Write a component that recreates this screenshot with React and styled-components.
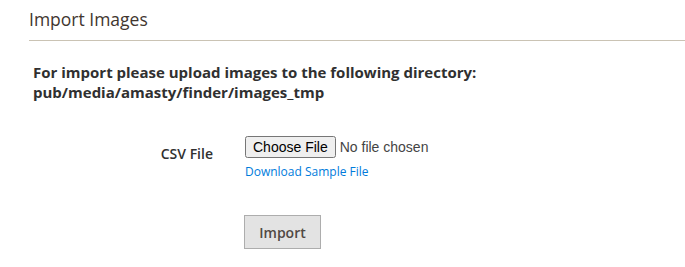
import React from "react";
import styled, { createGlobalStyle } from "styled-components";

const Global = createGlobalStyle`
  html, body { margin: 0; padding: 0; background: #fff; }
  body { font-family: "Open Sans", "Liberation Sans", sans-serif; color: #303030; }
`;

const Page = styled.div`
  padding: 0 0 0 29px;
`;

const Legend = styled.h2`
  margin: 0;
  padding: 8px 0 0 0;
  height: 32px;
  box-sizing: content-box;
  font-size: 17.5px;
  font-weight: 400;
  line-height: 22px;
  color: #41362f;
  border-bottom: 1px solid #cac3b4;
`;

const Notice = styled.p`
  margin: 21px 0 0 4px;
  font-size: 15px;
  font-weight: 700;
  line-height: 20px;
  color: #303030;
`;

const Row = styled.div`
  display: grid;
  grid-template-columns: 184px 1fr;
  column-gap: 32px;
  margin-top: 34px;
`;

const Label = styled.label`
  text-align: right;
  font-size: 14px;
  font-weight: 600;
  line-height: 20px;
  padding-top: 8px;
  color: #303030;
`;

const Control = styled.div`
  display: flex;
  flex-direction: column;
  align-items: flex-start;
`;

const FileInput = styled.input`
  font-family: "Liberation Sans", Arial, sans-serif;
  font-size: 14px;
  color: #444;
  margin: 0;
`;

const SampleLink = styled.a`
  margin-top: 6px;
  font-size: 12px;
  line-height: 16px;
  color: #007bdb;
  text-decoration: none;
`;

const ImportButton = styled.button`
  margin-top: 35px;
  margin-left: -1px;
  width: 77px;
  height: 34px;
  background: #e3e3e3;
  border: 1px solid #adadad;
  border-radius: 0;
  font-family: "Open Sans", sans-serif;
  font-size: 14px;
  font-weight: 600;
  color: #514943;
  padding: 0;
`;

export default function App() {
  return (
    <Page>
      <Global />
      <Legend>Import Images</Legend>
      <Notice>
        For import please upload images to the following directory:
        <br />
        pub/media/amasty/finder/images_tmp
      </Notice>
      <Row>
        <Label htmlFor="csv">CSV File</Label>
        <Control>
          <FileInput id="csv" type="file" />
          <SampleLink href="#">Download Sample File</SampleLink>
          <ImportButton type="button">Import</ImportButton>
        </Control>
      </Row>
    </Page>
  );
}
